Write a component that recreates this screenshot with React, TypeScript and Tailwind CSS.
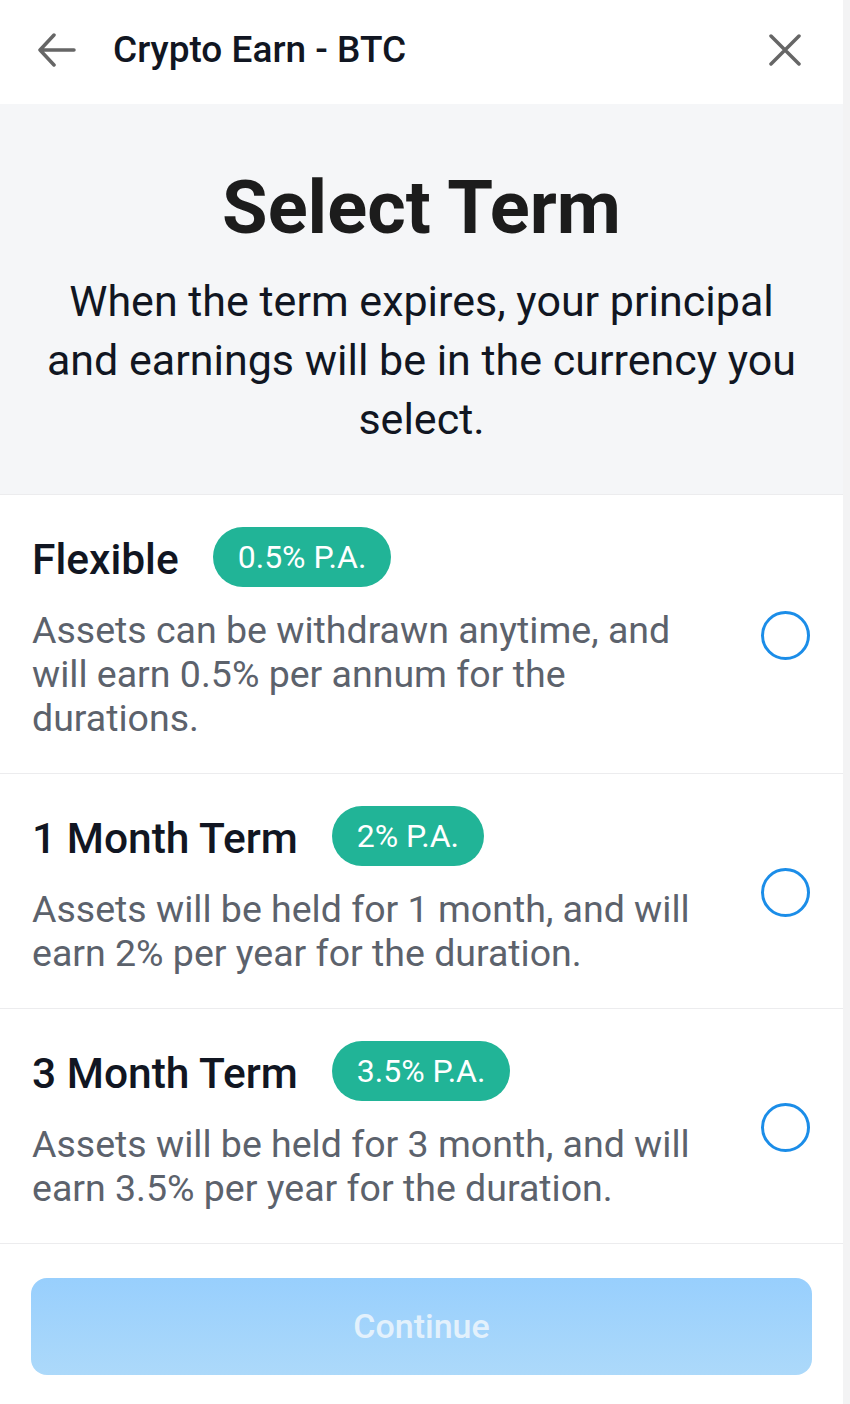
import React from "react";

type Term = {
  title: string;
  rate: string;
  lines: string[];
};

const terms: Term[] = [
  {
    title: "Flexible",
    rate: "0.5% P.A.",
    lines: ["Assets can be withdrawn anytime, and", "will earn 0.5% per annum for the", "durations."],
  },
  {
    title: "1 Month Term",
    rate: "2% P.A.",
    lines: ["Assets will be held for 1 month, and will", "earn 2% per year for the duration."],
  },
  {
    title: "3 Month Term",
    rate: "3.5% P.A.",
    lines: ["Assets will be held for 3 month, and will", "earn 3.5% per year for the duration."],
  },
];

const TermRow = ({ term }: { term: Term }) => {
  return (
    <div className="flex items-center border-b border-[#ececee] pl-[32px] pr-[33px] pt-[35px] pb-[33px]">
      <div className="flex-1">
        <div className="flex items-center gap-[34px] h-[60px]">
          <h3 className="text-[42.5px] font-medium text-[#111622] leading-[60px]">{term.title}</h3>
          <span className="h-[60px] -mt-[6px] rounded-full bg-[#21b497] px-[25px] flex items-center text-[32px] text-white">
            {term.rate}
          </span>
        </div>
        <p className="mt-[18px] text-[37.5px] leading-[44px] text-[#5c626c]">
          {term.lines.map((l, i) => (
            <span key={i} className="block whitespace-nowrap">
              {l}
            </span>
          ))}
        </p>
      </div>
      <div className="w-[49px] h-[49px] rounded-full border-[3px] border-[#1b8de8] shrink-0" />
    </div>
  );
};

export default function App() {
  return (
    <div className="flex bg-[#f3f3f4] font-['Roboto',sans-serif]">
      <div className="w-[843px] bg-white">
        <header className="h-[104px] flex items-center">
          <svg width="40" height="34" viewBox="0 0 40 34" className="ml-[37px] -mt-[4px]">
            <path d="M37 17H3M17 2L3 17l14 15" fill="none" stroke="#666" strokeWidth="3.5" strokeLinecap="round" strokeLinejoin="round" />
          </svg>
          <h1 className="ml-[36px] text-[37px] font-medium text-[#111622] flex-1 -mt-[4px]">Crypto Earn - BTC</h1>
          <svg width="34" height="32" viewBox="0 0 34 32" className="mr-[41px] -mt-[4px]">
            <path d="M3 2l28 28M31 2L3 30" fill="none" stroke="#666" strokeWidth="3.5" strokeLinecap="round" />
          </svg>
        </header>

        <section className="bg-[#f5f6f8] border-b border-[#ececee] pt-[62px] pb-[45px] px-[20px] text-center">
          <h2 className="text-[74px] font-bold text-[#1c1c1c] leading-[84px]">Select Term</h2>
          <p className="mt-[22px] text-[43px] leading-[59px] text-[#111622]">
            When the term expires, your principal
            <br />
            and earnings will be in the currency you
            <br />
            select.
          </p>
        </section>

        {terms.map((t) => (
          <TermRow key={t.title} term={t} />
        ))}

        <div className="px-[31px] pt-[34px] pb-[30px]">
          <button className="w-full h-[97px] rounded-[16px] bg-gradient-to-b from-[#98cffd] to-[#acd9fa] text-[34px] font-medium text-[#e3f1fc]">
            Continue
          </button>
        </div>
      </div>
    </div>
  );
}
